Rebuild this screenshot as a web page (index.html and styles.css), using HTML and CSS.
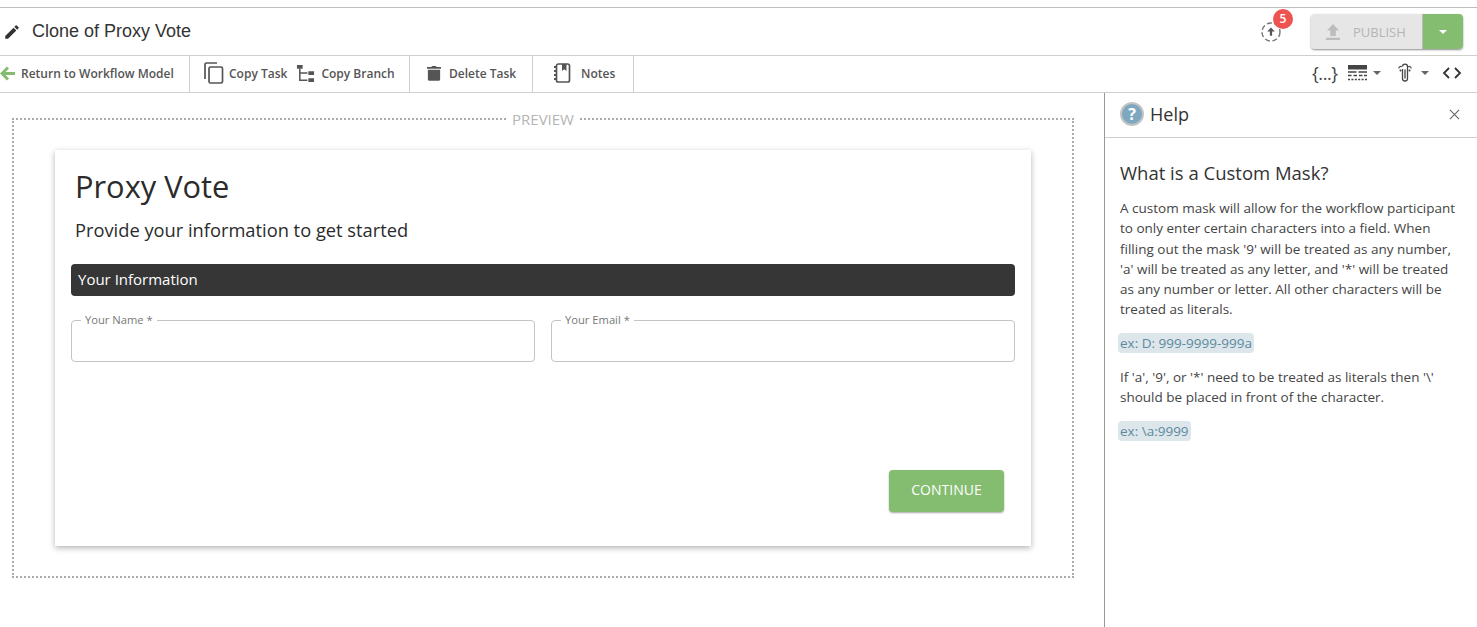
FILE: index.html
```html
<!DOCTYPE html>
<html lang="en">
<head>
<meta charset="utf-8">
<title>Clone of Proxy Vote</title>
<link rel="stylesheet" href="styles.css">
</head>
<body>
<div class="app">
  <header class="titlebar">
    <div class="title-group">
      <svg class="pencil" viewBox="0 0 24 24" width="18" height="18"><path d="M3 17.250V21h3.750L17.810 9.940l-3.750-3.750L3 17.250zM20.710 7.040a1 1 0 0 0 0-1.410l-2.340-2.340a1 1 0 0 0-1.410 0l-1.830 1.830 3.750 3.750 1.830-1.830z"/></svg>
      <span class="title">Clone of Proxy Vote</span>
    </div>
    <div class="title-actions">
      <div class="sync">
        <svg viewBox="0 0 22 22" width="22" height="22"><circle cx="11" cy="11" r="9" fill="none" stroke="#777" stroke-width="1.400" stroke-dasharray="5 2.600"/><path d="M11 6.500l3.800 4h-2.700v4.300h-2.200v-4.300H7.200z" fill="#555"/></svg>
        <span class="badge">5</span>
      </div>
      <div class="publish">
        <button class="publish-main">
          <svg viewBox="0 0 14 16" width="14" height="16"><path d="M7 0l6 6.500H9.800V12H4.200V6.500H1zM0 13.800h14V16H0z" fill="#bdbdbd"/></svg>
          <span>PUBLISH</span>
        </button>
        <button class="publish-caret"><span class="caret caret-white"></span></button>
      </div>
    </div>
  </header>
  <nav class="toolbar">
    <div class="tool-group tg-return">
      <button class="tool">
        <svg viewBox="0 0 15 15" width="15" height="15"><path d="M8 1.500L2 7.500l6 6M2.500 7.500H15" fill="none" stroke="#84bc70" stroke-width="3"/></svg>
        <span>Return to Workflow Model</span>
      </button>
    </div>
    <div class="tool-group tg-copy">
      <button class="tool">
        <svg viewBox="0 0 20 22" width="20" height="22"><path d="M1 17V2.500A1.500 1.500 0 0 1 2.500 1H13" fill="none" stroke="#555" stroke-width="1.700"/><rect x="5" y="5" width="13.500" height="16" rx="1.500" fill="none" stroke="#555" stroke-width="1.700"/></svg>
        <span>Copy Task</span>
      </button>
      <button class="tool tool-branch">
        <svg viewBox="0 0 20 20" width="19" height="19"><path d="M1 1h6v4H1zM13 7.500h6v4h-6zM13 15h6v4h-6z" fill="#555"/><path d="M4 5v12h8M4 9.500h8" fill="none" stroke="#555" stroke-width="1.600"/></svg>
        <span>Copy Branch</span>
      </button>
    </div>
    <div class="tool-group tg-delete">
      <button class="tool">
        <svg viewBox="0 0 16 18" width="14" height="18"><path d="M0 2.200h5L5.800 1h4.400l.8 1.200h5v2H0zM1 5.200h14V16a1.800 1.800 0 0 1-1.800 1.800H2.800A1.800 1.800 0 0 1 1 16z" fill="#555"/></svg>
        <span>Delete Task</span>
      </button>
    </div>
    <div class="tool-group tg-notes">
      <button class="tool">
        <svg viewBox="0 0 18 20" width="18" height="20"><rect x="3.500" y="1" width="13" height="18" rx="1.800" fill="none" stroke="#555" stroke-width="1.700"/><path d="M9 1h4.500v7l-2.250-1.800L9 8z" fill="#555"/><path d="M1 4h3M1 8h3M1 12h3M1 16h3" stroke="#555" stroke-width="1.800"/></svg>
        <span>Notes</span>
      </button>
    </div>
    <div class="tool-right">
      <span class="braces">{...}</span>
      <span class="tool-icon">
        <svg viewBox="0 0 19 16" width="19" height="16"><path d="M0 0h19v4.500H0z" fill="#444"/><path d="M0 7h8.500M10.500 7H19" stroke="#444" stroke-width="1.500"/><path d="M0 10.500h3.500M5.500 10.500H9M11 10.500h3.500M16 10.500h3" stroke="#444" stroke-width="1.500"/><path d="M0 14.500h19" stroke="#444" stroke-width="1.700" stroke-dasharray="2 1.400"/></svg>
        <span class="caret"></span>
      </span>
      <span class="tool-icon clip">
        <svg viewBox="0 0 14 20" width="14" height="20"><path d="M4.500 6v9.500a2.500 2.500 0 0 0 5 0V3.600a2.500 2.500 0 0 0-5 0M7 6.500v9" fill="none" stroke="#444" stroke-width="1.300"/><path d="M.8 5.500a2 2 0 0 1 3-1.800M13.200 5.500a2 2 0 0 0-3-1.800" fill="none" stroke="#444" stroke-width="1.100"/><circle cx="2.500" cy="7.500" r="1" fill="#444"/><circle cx="11.500" cy="7.500" r="1" fill="#444"/></svg>
        <span class="caret"></span>
      </span>
      <svg class="code" viewBox="0 0 20 12" width="20" height="12"><path d="M7 1L2 6l5 5M13 1l5 5-5 5" fill="none" stroke="#333" stroke-width="1.800"/></svg>
    </div>
  </nav>
  <div class="workspace">
    <main class="canvas">
      <fieldset class="preview">
        <legend>PREVIEW</legend>
        <section class="card">
          <h1>Proxy Vote</h1>
          <p class="subtitle">Provide your information to get started</p>
          <div class="section-bar">Your Information</div>
          <div class="fields">
            <fieldset class="field"><legend>Your Name *</legend></fieldset>
            <fieldset class="field"><legend>Your Email *</legend></fieldset>
          </div>
          <div class="card-actions"><button class="continue">CONTINUE</button></div>
        </section>
      </fieldset>
    </main>
    <aside class="help">
      <div class="help-head">
        <div class="help-title">
          <span class="help-icon">?</span>
          <span>Help</span>
        </div>
        <svg viewBox="0 0 12 12" width="11" height="11"><path d="M1 1l10 10M11 1L1 11" stroke="#666" stroke-width="1.200"/></svg>
      </div>
      <div class="help-body">
        <h2>What is a Custom Mask?</h2>
        <p>A custom mask will allow for the workflow participant to only enter certain characters into a field. When filling out the mask '9' will be treated as any number, 'a' will be treated as any letter, and '*' will be treated as any number or letter. All other characters will be treated as literals.</p>
        <p><span class="example">ex: D: 999-9999-999a</span></p>
        <p>If 'a', '9', or '*' need to be treated as literals then '\' should be placed in front of the character.</p>
        <p><span class="example">ex: \a:9999</span></p>
      </div>
    </aside>
  </div>
</div>
</body>
</html>
```
FILE: styles.css
```css
* { box-sizing: border-box; }
html, body { margin: 0; height: 100%; background: #fff; overflow: hidden; }
body { font-family: "Open Sans", "Liberation Sans", sans-serif; color: #333; }
button { font: inherit; border: 0; background: none; padding: 0; color: inherit; }

.app { height: 627px; padding-top: 7px; display: flex; flex-direction: column; }

.titlebar {
  height: 49px;
  border-top: 1px solid #bdbdbd;
  border-bottom: 1px solid #cfcfcf;
  display: flex;
  align-items: center;
  justify-content: space-between;
  padding: 0 14px 0 3px;
}
.title-group { display: flex; align-items: center; gap: 11px; }
.pencil { fill: #333; }
.title { font-family: "Liberation Sans", Arial, sans-serif; font-size: 18px; color: #333; }
.title-actions { display: flex; align-items: center; gap: 29px; }
.sync { position: relative; width: 22px; height: 22px; }
.sync svg { display: block; }
.badge {
  position: absolute;
  top: -12px;
  left: 13px;
  width: 20px;
  height: 20px;
  border-radius: 50%;
  background: #ef5350;
  color: #fff;
  font-size: 12px;
  line-height: 20px;
  font-weight: 600;
  text-align: center;
}
.publish {
  display: flex;
  height: 35px;
  border-radius: 4px;
  overflow: hidden;
  box-shadow: 0 1px 2px rgba(0,0,0,.45);
}
.publish-main {
  width: 112px;
  margin-left: 0;
  background: #e6e6e6;
  color: #b5b5b5;
  font-size: 13px;
  display: flex;
  align-items: center;
  gap: 13px;
  padding-left: 15px;
  border-right: 1px solid #bbb;
}
.publish-caret { width: 40px; background: #84bc70; display: flex; align-items: center; justify-content: center; }

.caret { display: inline-block; width: 0; height: 0; border-left: 4px solid transparent; border-right: 4px solid transparent; border-top: 4px solid #666; }
.caret-white { border-top-color: #fff; border-left-width: 4.500px; border-right-width: 4.500px; }

.toolbar {
  height: 37px;
  border-bottom: 1px solid #cfcfcf;
  display: flex;
  align-items: stretch;
}
.tool-group { display: flex; align-items: center; border-right: 1px solid #cfcfcf; padding-bottom: 2px; }
.tg-return { width: 190px; }
.tg-copy { width: 220px; padding-left: 14px; gap: 9px; }
.tg-delete { width: 123px; padding-left: 17px; }
.tg-notes { width: 101px; padding-left: 20px; }
.tool { display: flex; align-items: center; font-size: 12px; font-weight: 600; color: #555; white-space: nowrap; }
.tg-return .tool { gap: 6px; }
.tg-copy .tool { gap: 5px; }
.tg-copy .tool-branch { gap: 6px; }
.tg-delete .tool { gap: 8px; }
.tg-notes .tool { gap: 10px; }
.tool svg { display: block; flex: none; }
.tool-right { margin-left: auto; display: flex; align-items: center; padding: 0 15px 2px 0; }
.braces { font-size: 18px; line-height: 24px; color: #444; letter-spacing: -.4px; width: 36px; }
.tool-icon { display: flex; align-items: center; gap: 6px; }
.tool-icon svg { display: block; }
.clip { margin-left: 17px; gap: 9px; }
.code { margin-left: 13px; }

.workspace { flex: 1; display: flex; min-height: 0; }
.canvas { flex: 1; min-width: 0; padding: 18px 30px 0 12px; }
.preview {
  margin: 0;
  height: 467px;
  padding: 23px 41px 0 41px;
  border: 2px dotted #aaa;
}
.preview > legend {
  margin: 0 auto;
  padding: 0 6px;
  font-size: 15px;
  line-height: 16px;
  color: #b5b5b5;
}
.card {
  height: 396px;
  padding: 15px 16px 0;
  background: #fff;
  box-shadow: 0 2px 6px rgba(0,0,0,.3);
  display: flex;
  flex-direction: column;
}
h1 { margin: 0 0 0 4px; font-size: 30.800px; line-height: 42px; font-weight: 400; color: #2b2b2b; }
.subtitle { margin: 10px 0 0 4px; font-size: 18.300px; line-height: 26px; color: #2b2b2b; }
.section-bar {
  margin-top: 21px;
  height: 32px;
  border-radius: 4px;
  background: #363636;
  color: #fff;
  font-size: 15px;
  line-height: 30px;
  padding-left: 7px;
}
.fields { display: grid; grid-template-columns: 1fr 1fr; gap: 16px; margin-top: 17px; }
.field {
  margin: 0;
  padding: 0;
  height: 49px;
  border: 1px solid #c4c4c4;
  border-radius: 4px;
  min-width: 0;
}
.field legend { margin-left: 9px; padding: 0 4px; font-size: 11.200px; line-height: 14px; color: #777; }
.card-actions { display: flex; justify-content: flex-end; margin-top: 108px; padding-right: 11px; }
.continue {
  width: 115px;
  height: 42px;
  padding-bottom: 3px;
  background: #84bc70;
  color: #fff;
  font-size: 14px;
  border-radius: 4px;
  box-shadow: 0 1px 2px rgba(0,0,0,.35);
}

.help { width: 373px; border-left: 1px solid #999; display: flex; flex-direction: column; flex: none; }
.help-head {
  height: 45px;
  border-bottom: 1px solid #cfcfcf;
  display: flex;
  align-items: center;
  justify-content: space-between;
  padding: 0 17px 2px 15px;
}
.help-title { display: flex; align-items: center; gap: 6px; font-size: 18px; color: #333; }
.help-icon {
  width: 24px;
  height: 24px;
  border-radius: 50%;
  background: #7ea8c0;
  border: 2px solid #c4c4c4;
  color: #fff;
  font-size: 16px;
  font-weight: 700;
  line-height: 20px;
  text-align: center;
}
.help-body { padding: 22px 15px 0; font-size: 13.500px; line-height: 20.250px; color: #444; }
.help-body h2 { margin: 0 0 12px; font-size: 18.500px; line-height: 26px; font-weight: 400; color: #333; }
.help-body p { margin: 0 0 14px; }
.help-body h2 + p { margin-bottom: 13px; }
.example { background: #dce6eb; color: #5d8a9e; border-radius: 4px; padding: 1px 2px; margin-left: -2px; }
```
